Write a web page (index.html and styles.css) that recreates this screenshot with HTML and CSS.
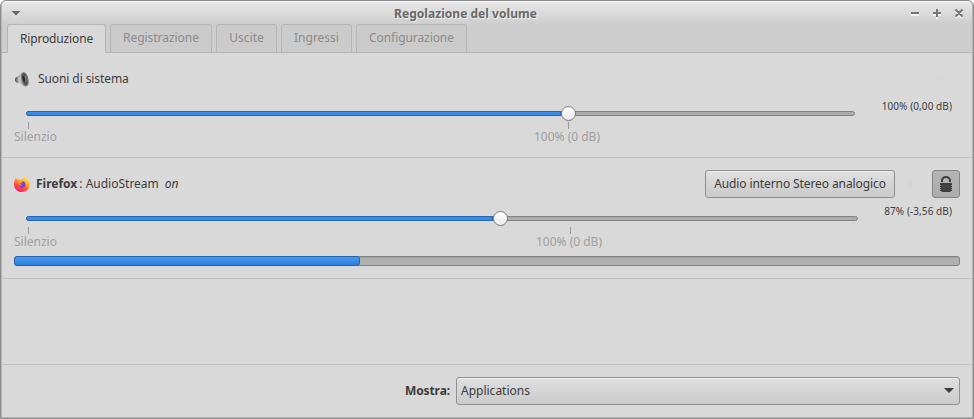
FILE: index.html
```html
<!DOCTYPE html>
<html lang="it">
<head>
<meta charset="utf-8">
<title>Regolazione del volume</title>
<link rel="stylesheet" href="styles.css">
</head>
<body>
<main class="window">
  <header class="titlebar">
    <svg class="window-menu" width="10" height="6" viewBox="0 0 10 6"><path d="M1 1.500h8L5 6z" fill="#f5f5f5"/><path d="M.5 0h9L5 4.700z" fill="#696969"/></svg>
    <h1>Regolazione del volume</h1>
    <svg class="controls" width="54" height="11" viewBox="0 0 54 11" fill="none" stroke-width="2">
      <path d="M1 6h8M23 6h8M27 2v8M46 3l6 6M52 3l-6 6" stroke="#f3f3f3" transform="translate(0 1)"/>
      <path d="M1 5h8M23 5h8M27 1v8M45.500 1.500l7 7M52.500 1.500l-7 7" stroke="#777"/>
    </svg>
  </header>
  <nav class="tabs">
    <button class="tab active tab-play">Riproduzione</button>
    <button class="tab tab-record">Registrazione</button>
    <button class="tab tab-output">Uscite</button>
    <button class="tab tab-input">Ingressi</button>
    <button class="tab tab-config">Configurazione</button>
  </nav>
  <section class="stream system">
    <div class="stream-head">
      <svg class="app-icon" width="16" height="16" viewBox="0 0 16 16">
        <defs><linearGradient id="cone"><stop stop-color="#666"/><stop offset=".4" stop-color="#bbb"/><stop offset="1" stop-color="#666"/></linearGradient></defs>
        <path d="M1 8.500c0-2 1-2.500 3-3l3.500-3.500C10 0 12 2 13 4c2 4 2 8 0 11-2 1-4 0-6.500-3H4.500C2 12 1 10.500 1 8.500z" fill="url(#cone)"/>
        <path d="M3 6.500c-2 1-2 3.500 0 4.500" stroke="#555" fill="none"/>
        <path d="M5 6v5.500" stroke="#ddd"/>
        <ellipse cx="10.800" cy="8.200" rx="2.800" ry="6.500" transform="rotate(-14 10.800 8.200)" fill="#50534f" stroke="#777"/>
        <ellipse cx="9.800" cy="8" rx="1.100" ry="2.800" transform="rotate(-13 9.800 8)" fill="#252725"/>
        <path d="M11.500 5l.5 6" stroke="#858885"/>
      </svg>
      <span class="name-system">Suoni di sistema</span>
      <svg class="ghost" width="14" height="10" viewBox="0 0 14 10"><path d="M1 4h2l2-2v6L3 6H1zM9 3.500l3 3M12 3.500l-3 3" fill="#d6d6d6" stroke="#d6d6d6"/></svg>
    </div>
    <div class="control-row">
      <div class="scale">
        <div class="track"><div class="fill"></div><i class="knob"></i></div>
        <div class="marks"><span class="mark silence">Silenzio</span><span class="mark full">100% (0 dB)</span></div>
      </div>
      <span class="level">100% (0,00 dB)</span>
    </div>
  </section>
  <section class="stream firefox">
    <div class="stream-head">
      <svg class="app-icon" width="16" height="16" viewBox="0 0 16 16">
        <defs>
          <linearGradient id="flame" x1=".8" y1="0" x2=".25" y2="1"><stop stop-color="#fff044"/><stop offset=".35" stop-color="#ffb52a"/><stop offset=".65" stop-color="#ff5138"/><stop offset="1" stop-color="#f6167c"/></linearGradient>
          <radialGradient id="globe"><stop stop-color="#6951df"/><stop offset="1" stop-color="#8b36c3"/></radialGradient>
        </defs>
        <path d="M2 2l1.500 2L5 3l1 1.200L9 3l1.200-3c1 2 3 3 4 5l.5-1C17.500 10 14 16 8 16S-.8 11 .3 6C.5 4 1 3 2 2z" fill="url(#flame)"/>
        <path d="M5 3.800l4-.8 3 3-2 1-4-1z" fill="#ffbd2c"/>
        <circle cx="8.200" cy="8.500" r="3.200" fill="url(#globe)"/>
        <path d="M3 5c1-1 2-1 3 0l3 .8C8 7 7 7 6 7.800c.5 1 1.500 1.200 2.500 1-1 1-2.500 1-3.500.2" fill="#ff9828"/>
      </svg>
      <b class="name-firefox">Firefox</b><span class="stream-name">: AudioStream</span><em>on</em>
      <button class="device">Audio interno Stereo analogico</button>
      <svg class="ghost near" width="14" height="10" viewBox="0 0 14 10"><path d="M1 4h2l2-3v8L3 6H1zM9 3.500l3 3M12 3.500l-3 3" fill="#d5d5d5" stroke="#d5d5d5"/></svg>
      <button class="lock" aria-label="Blocca canali">
        <svg width="12" height="16" viewBox="0 0 12 16"><path d="M2 6V4.500a4 3.500 0 0 1 8 0V6" fill="none" stroke="#3c3c3c" stroke-width="2"/><path d="M0 7h12v2H0zM0 10h12v1H0zM0 12h12v1H0zM0 14h12v1H0zM.7 9h10.600v6H.7zM1.500 15h9v1h-9z" fill="#3c3c3c"/><path d="M1 9.500h10M1 11.500h10M1 13.500h10" stroke="#555" stroke-width=".6"/></svg>
      </button>
    </div>
    <div class="control-row">
      <div class="scale">
        <div class="track"><div class="fill"></div><i class="knob"></i></div>
        <div class="marks"><span class="mark silence">Silenzio</span><span class="mark full">100% (0 dB)</span></div>
      </div>
      <span class="level">87% (-3,56 dB)</span>
    </div>
    <div class="meter"><div class="meter-fill"></div></div>
  </section>
  <footer>
    <label class="show">Mostra:</label>
    <button class="select"><span>Applications</span><svg width="10" height="5" viewBox="0 0 10 5"><path d="M0 0h10L5 5z" fill="#3c3c3c"/></svg></button>
  </footer>
</main>
</body>
</html>
```
FILE: styles.css
```css
* { box-sizing: border-box; }
body { margin: 0; background: #fff; overflow: hidden; }
.window {
  width: 974px; height: 419px;
  display: flex; flex-direction: column;
  border: 1px solid #8c8c8c;
  box-shadow: inset 1px 0 #b4b4b4, inset -1px -1px #b4b4b4;
  border-radius: 6px 6px 0 0;
  background: #d9d9d9;
  font: 12px/16px "Noto Sans", sans-serif;
  color: #3c3c3c;
  white-space: nowrap;
}
button { font: inherit; color: inherit; white-space: nowrap; }
svg { flex: none; display: block; }
.titlebar {
  height: 23px; flex: none; display: flex; align-items: center;
  padding: 1px 8px 0 9px; margin: 0 1px;
  border-top: 1px solid #fafafa; border-radius: 5px 5px 0 0;
  background: linear-gradient(#e7e7e7, #cecece);
}
.titlebar h1 {
  flex: 1; margin: 0; text-align: center;
  font-size: 12px; line-height: 16px; letter-spacing: .04px; color: #696969; text-shadow: 1px 1px #eee;
}
.tabs {
  height: 29px; flex: none; display: flex; gap: 4px;
  margin: 0 1px; padding: 0 5px;
  background: #cdcdcd; border-bottom: 1px solid #b5b5b5;
}
.tab {
  height: 29px; padding: 0 0 1px; border: 1px solid #b5b5b5;
  border-radius: 3px 3px 0 0; background: #cbcbcb; color: #8b8b8b;
}
.tab.active { background: #d9d9d9; border-bottom-color: #d9d9d9; color: #3c3c3c; padding: 0; }
.tab-play { width: 99px; letter-spacing: -.14px; }
.tab-record { width: 102px; letter-spacing: -.05px; }
.tab-output { width: 61px; }
.tab-input { width: 71px; }
.tab-config { width: 111px; letter-spacing: -.08px; }
.stream { margin: 0 1px; padding: 0 12px; border-bottom: 1px solid #c1c1c1; flex: none; }
.system { height: 105px; padding-top: 12px; }
.firefox { height: 121px; padding-top: 12px; }
.stream-head { height: 28px; display: flex; align-items: center; }
.name-system { margin-left: 8px; letter-spacing: -.09px; }
.name-firefox { margin-left: 6px; }
.stream-name { margin-left: 2px; }
em { margin-left: 6px; }
.ghost { margin-left: auto; margin-right: 9px; }
.device {
  width: 190px; height: 28px; padding: 0; margin-left: auto; letter-spacing: -.1px;
  border: 1px solid #8f8f8f; border-radius: 3px;
  background: linear-gradient(#e0e0e0, #cacaca); box-shadow: inset 0 1px #eee;
}
.ghost.near { margin-left: 11px; margin-right: 12px; }
.lock {
  width: 28px; height: 28px; padding: 0; display: grid; place-items: center;
  border: 1px solid #858585; border-radius: 3px;
  background: linear-gradient(#b5b5b5, #acacac);
}
.control-row { display: flex; justify-content: space-between; height: 52px; }
.scale { width: 841px; padding: 18px 0 0 12px; }
.firefox .scale { width: 844px; }
.track {
  height: 5px; display: flex; align-items: center;
  border: 1px solid #828282; border-radius: 3px; background: #adadad;
}
.fill {
  width: 535px; height: 5px; margin-left: -1px; flex: none;
  border: 1px solid #2565aa; border-radius: 3px 0 0 3px; background: #3a8be5;
}
.firefox .fill { width: 467px; }
.knob {
  width: 15px; height: 15px; flex: none; border: 1px solid #7c7c7c;
  border-radius: 50%; background: linear-gradient(#fff, #eaeaea);
}
.marks { display: flex; margin: 6px 0 0 -12px; color: #a0a0a0; line-height: 16px; }
.mark { display: block; }
.mark::before { content: ""; display: block; width: 1px; height: 7px; background: #999; margin-left: 14px; }
.full { margin-left: 477px; }
.full::before { margin-left: 34px; }
.firefox .full { margin-left: 479px; }
.level { font-size: 10px; line-height: 14px; letter-spacing: .08px; margin: 6px 8px 0 0; }
.meter {
  height: 10px; margin-top: 6px; border: 1px solid #828282;
  border-radius: 3px; background: #b0b0b0; box-shadow: inset 0 1px #a0a0a0;
}
.meter-fill {
  height: 10px; width: 346px; margin: -1px 0 0 -1px; border: 1px solid #2565aa;
  border-radius: 3px; background: linear-gradient(#4a99ef, #2c7fdc);
}
footer {
  margin: 85px 1px 0; border-top: 1px solid #c1c1c1;
  height: 52px; padding: 0 12px; display: flex; align-items: center; justify-content: flex-end; gap: 6px;
}
.show { font-weight: 700; letter-spacing: -.1px; }
.select {
  width: 504px; height: 28px; padding: 0 5px 0 4px;
  display: flex; align-items: center; justify-content: space-between;
  border: 1px solid #929292; border-radius: 3px;
  background: linear-gradient(#dedede, #cbcbcb); box-shadow: inset 0 1px #f0f0f0;
}
```
